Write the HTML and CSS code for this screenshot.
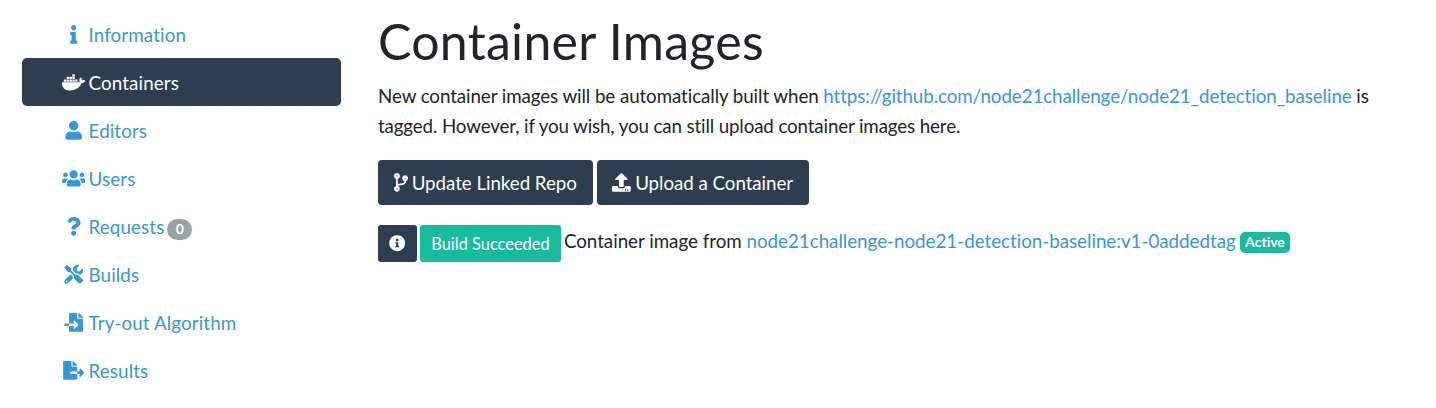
FILE: index.html
```html
<!DOCTYPE html>
<html lang="en">
<head>
<meta charset="utf-8">
<title>Container Images</title>
<link rel="stylesheet" href="styles.css">
</head>
<body>
<div class="layout">
<nav class="sidebar">
<a class="nav-link"><svg class="icon" viewBox="0 0 192 512"><path d="M20 424.229h20V279.771H20c-11.046 0-20-8.954-20-20V212c0-11.046 8.954-20 20-20h112c11.046 0 20 8.954 20 20v212.229h20c11.046 0 20 8.954 20 20V492c0 11.046-8.954 20-20 20H20c-11.046 0-20-8.954-20-20v-47.771c0-11.046 8.954-20 20-20zM96 0C56.235 0 24 32.235 24 72s32.235 72 72 72 72-32.235 72-72S135.764 0 96 0z"/></svg><span>Information</span></a>
<a class="nav-link active"><svg class="icon" viewBox="0 0 640 512"><path d="M349.900 236.300h-66.100v-59.400h66.100v59.400zm0-204.300h-66.100v60.700h66.100V32zm78.200 144.800H362v59.400h66.100v-59.400zm-156.300-72.100h-66.100v60.100h66.100v-60.100zm78.100 0h-66.100v60.100h66.100v-60.100zm276.800 100c-14.400-9.700-47.600-13.200-73.100-8.400-3.300-24-16.700-44.900-41.100-63.700l-14-9.300-9.300 14c-18.400 27.800-23.400 73.600-3.700 103.800-8.700 4.700-25.800 11.100-48.400 10.700H2.400c-8.700 50.800 5.800 116.800 44 162.100 37.100 43.900 92.700 66.200 165.400 66.200 157.400 0 273.900-72.500 328.400-204.200 21.400.4 67.600.1 91.300-45.200 1.500-2.500 6.600-13.200 8.500-17.100l-13.300-8.900zm-511.100-27.900h-66v59.400h66.100v-59.400zm78.100 0h-66.100v59.400h66.100v-59.400zm78.100 0h-66.100v59.400h66.100v-59.400zm-78.100-72.100h-66.100v60.100h66.100v-60.100z"/></svg><span>Containers</span></a>
<a class="nav-link"><svg class="icon" viewBox="0 0 448 512"><path d="M224 256c70.700 0 128-57.300 128-128S294.700 0 224 0 96 57.300 96 128s57.300 128 128 128zm89.600 32h-16.700c-22.200 10.200-46.900 16-72.900 16s-50.600-5.800-72.900-16h-16.700C60.200 288 0 348.200 0 422.400V464c0 26.500 21.500 48 48 48h352c26.500 0 48-21.500 48-48v-41.600c0-74.200-60.200-134.400-134.400-134.400z"/></svg><span>Editors</span></a>
<a class="nav-link"><svg class="icon" viewBox="0 0 640 512"><path d="M96 224c35.300 0 64-28.700 64-64s-28.700-64-64-64-64 28.700-64 64 28.700 64 64 64zm448 0c35.300 0 64-28.700 64-64s-28.700-64-64-64-64 28.700-64 64 28.700 64 64 64zm32 32h-64c-17.600 0-33.500 7.100-45.100 18.600 40.300 22.100 68.900 62 75.100 109.400h66c17.700 0 32-14.300 32-32v-32c0-35.300-28.700-64-64-64zm-256 0c61.900 0 112-50.100 112-112S381.900 32 320 32 208 82.100 208 144s50.100 112 112 112zm76.800 32h-8.300c-20.800 10-43.900 16-68.500 16s-47.600-6-68.500-16h-8.300C179.600 288 128 339.600 128 403.200V432c0 26.500 21.500 48 48 48h288c26.500 0 48-21.500 48-48v-28.800c0-63.600-51.600-115.200-115.200-115.200zm-223.700-13.400C161.500 263.100 145.600 256 128 256H64c-35.300 0-64 28.700-64 64v32c0 17.700 14.300 32 32 32h65.900c6.300-47.400 34.900-87.300 75.200-109.400z"/></svg><span>Users</span></a>
<a class="nav-link"><svg class="icon" viewBox="0 0 384 512"><path d="M202.021 0C122.202 0 70.503 32.703 29.914 91.026c-7.363 10.580-5.093 25.086 5.178 32.874l43.138 32.709c10.373 7.865 25.132 6.026 33.253-4.148 25.049-31.381 43.630-49.449 82.757-49.449 30.764 0 68.816 19.799 68.816 49.631 0 22.552-18.617 34.134-48.993 51.164-35.423 19.860-82.299 44.576-82.299 106.405V320c0 13.255 10.745 24 24 24h72.471c13.255 0 24-10.745 24-24v-5.773c0-42.860 125.268-44.645 125.268-160.627C377.504 66.256 286.902 0 202.021 0zM192 373.459c-38.196 0-69.271 31.075-69.271 69.271 0 38.195 31.075 69.270 69.271 69.270s69.271-31.075 69.271-69.271-31.075-69.270-69.271-69.270z"/></svg><span>Requests <b class="badge pill">0</b></span></a>
<a class="nav-link"><svg class="icon" viewBox="0 0 512 512"><path d="M501.100 395.700L384 278.600c-23.100-23.100-57.600-27.600-85.400-13.900L192 158.100V96L64 0 0 64l96 128h62.100l106.600 106.600c-13.600 27.800-9.200 62.300 13.900 85.400l117.100 117.100c14.600 14.600 38.200 14.600 52.700 0l52.700-52.700c14.500-14.600 14.500-38.200 0-52.700zM331.700 225c28.300 0 54.900 11 74.900 31l19.400 19.400c15.800-6.900 30.800-16.500 43.800-29.500 37.100-37.100 49.700-89.300 37.900-136.700-2.200-9-13.500-12.100-20.100-5.500l-74.400 74.400-67.900-11.300L334 98.900l74.400-74.400c6.600-6.600 3.400-17.900-5.700-20.200-47.400-11.700-99.600.9-136.600 37.900-28.500 28.500-41.900 66.100-41.200 103.600l82.100 82.100c8.100-1.900 16.500-2.900 24.700-2.900zm-103.900 82l-56.700-56.700L18.700 402.800c-25 25-25 65.500 0 90.500s65.500 25 90.500 0l123.600-123.600c-7.600-19.900-9.900-41.600-5-62.700zM64 472c-13.200 0-24-10.800-24-24 0-13.300 10.700-24 24-24s24 10.700 24 24c0 13.200-10.700 24-24 24z"/></svg><span>Builds</span></a>
<a class="nav-link"><svg class="icon" viewBox="0 0 512 512"><path d="M16 288c-8.800 0-16 7.200-16 16v32c0 8.800 7.200 16 16 16h112v-64zm489-183L407.100 7c-4.500-4.500-10.600-7-17-7H384v128h128v-6.100c0-6.300-2.500-12.400-7-16.900zm-153 31V0H152c-13.300 0-24 10.700-24 24v264h128v-65.200c0-14.300 17.300-21.400 27.400-11.300L379 308c6.600 6.700 6.600 17.400 0 24l-95.700 96.400c-10.100 10.100-27.400 3-27.400-11.300V352H128v136c0 13.300 10.700 24 24 24h336c13.300 0 24-10.700 24-24V160H376c-13.200 0-24-10.800-24-24z"/></svg><span>Try-out Algorithm</span></a>
<a class="nav-link"><svg class="icon" viewBox="0 0 576 512"><path d="M384 121.900c0-6.300-2.500-12.400-7-16.900L279.100 7c-4.500-4.500-10.600-7-17-7H256v128h128zM571 308l-95.700-96.400c-10.100-10.100-27.400-3-27.400 11.300V288h-64v64h64v65.200c0 14.300 17.300 21.400 27.400 11.300L571 332c6.600-6.600 6.600-17.400 0-24zm-379 28v-32c0-8.800 7.200-16 16-16h176V160H248c-13.200 0-24-10.800-24-24V0H24C10.700 0 0 10.700 0 24v464c0 13.300 10.700 24 24 24h336c13.300 0 24-10.700 24-24V352H208c-8.800 0-16-7.200-16-16z"/></svg><span>Results</span></a>
</nav>
<main class="content">
<h1>Container Images</h1>
<p>New container images will be automatically built when <a>https://github.com/node21challenge/node21_detection_baseline</a> is <span class="tail">tagged. However, if you wish, you can still upload container images here.</span></p>
<div class="actions">
<a class="btn"><svg class="glyph" viewBox="0 0 384 512"><path d="M384 144c0-44.200-35.800-80-80-80s-80 35.800-80 80c0 36.400 24.300 67.100 57.500 76.800-.6 16.100-4.200 28.500-11 36.900-15.400 19.200-49.300 22.400-85.200 25.700-28.200 2.600-57.400 5.400-81.300 16.900v-144c32.500-10.200 56-40.500 56-76.300 0-44.200-35.800-80-80-80S0 35.800 0 80c0 35.800 23.500 66.100 56 76.300v199.300C23.500 365.900 0 396.200 0 432c0 44.200 35.800 80 80 80s80-35.800 80-80c0-34-21.200-63.100-51.200-74.600 3.100-5.200 7.800-9.800 14.900-13.400 16.200-8.200 40.400-10.400 66.100-12.800 42.200-3.900 90-8.400 118.200-43.400 14-17.400 21.100-39.800 21.600-67.900 31.600-10.800 54.400-40.700 54.400-75.900zM80 64c8.800 0 16 7.200 16 16s-7.200 16-16 16-16-7.200-16-16 7.200-16 16-16zm0 384c-8.800 0-16-7.200-16-16s7.200-16 16-16 16 7.200 16 16-7.200 16-16 16zm224-320c8.800 0 16 7.200 16 16s-7.200 16-16 16-16-7.200-16-16 7.200-16 16-16z"/></svg><span>Update Linked Repo</span></a>
<a class="btn"><svg class="glyph" viewBox="0 0 512 512"><path d="M296 384h-80c-13.300 0-24-10.700-24-24V192h-87.700c-17.800 0-26.700-21.500-14.100-34.100L242.300 5.700c7.500-7.500 19.800-7.500 27.300 0l152.200 152.200c12.600 12.600 3.700 34.100-14.100 34.100H320v168c0 13.300-10.700 24-24 24zm216-8v112c0 13.300-10.700 24-24 24H24c-13.300 0-24-10.700-24-24V376c0-13.300 10.700-24 24-24h136v8c0 30.900 25.100 56 56 56h80c30.900 0 56-25.100 56-56v-8h136c13.300 0 24 10.700 24 24zm-124 88c0-11-9-20-20-20s-20 9-20 20 9 20 20 20 20-9 20-20zm64 0c0-11-9-20-20-20s-20 9-20 20 9 20 20 20 20-9 20-20z"/></svg><span>Upload a Container</span></a>
</div>
<div class="image-row">
<a class="btn-sm"><svg class="glyph" viewBox="0 0 512 512"><path d="M256 8C119 8 8 119.100 8 256c0 137 111 248 248 248s248-111 248-248C504 119.100 393 8 256 8zm0 110c23.200 0 42 18.800 42 42s-18.800 42-42 42-42-18.800-42-42 18.800-42 42-42zm56 254c0 6.600-5.400 12-12 12h-88c-6.600 0-12-5.400-12-12v-24c0-6.600 5.400-12 12-12h12v-64h-12c-6.600 0-12-5.400-12-12v-24c0-6.600 5.400-12 12-12h64c6.600 0 12 5.400 12 12v100h12c6.600 0 12 5.400 12 12z"/></svg></a>
<a class="btn-sm success">Build Succeeded</a>
<span class="desc">Container image from <a>node21challenge-node21-detection-baseline:v1-0addedtag</a> <b class="badge raised">Active</b></span>
</div>
</main>
</div>
</body>
</html>
```
FILE: styles.css
```css
* { box-sizing: border-box; }
body {
  margin: 0;
  background: #fff;
  color: #212529;
  font: 400 18.75px/30px Lato, sans-serif;
  font-variant-ligatures: none;
}
a { color: #3498db; text-decoration: none; }
svg { fill: currentColor; flex: none; }
.layout { display: flex; padding: 10px 22px 0; gap: 37px; }
.sidebar { width: 319px; flex: none; }
.nav-link {
  display: flex;
  align-items: center;
  height: 48px;
  padding-left: 40px;
  gap: 3.2px;
  border-radius: 5px;
  letter-spacing: 0.12px;
}
.nav-link span { padding-top: 2px; }
.nav-link.active { background: #2c3e50; color: #fff; }
.icon { width: 23.4px; height: 18.75px; margin-top: 1px; }
.content { flex: 1; min-width: 0; }
h1 { margin: 1px 0 10px; font-size: 50px; font-weight: 400; line-height: 60px; letter-spacing: 0.3px; }
p { margin: 0 0 19px; letter-spacing: -0.08px; }
.tail { letter-spacing: -0.13px; }
.actions { display: flex; gap: 4px; margin-bottom: 20px; }
.btn {
  display: flex;
  align-items: center;
  height: 45px;
  padding: 0 16px 0 15.6px;
  gap: 4px;
  border-radius: 4px;
  background: #2c3e50;
  color: #fff;
  letter-spacing: -0.05px;
}
.glyph { height: 18.75px; }
.image-row { display: flex; gap: 3px; }
.btn-sm {
  display: flex;
  align-items: center;
  height: 37px;
  padding: 0 11.3px;
  border-radius: 3px;
  background: #2c3e50;
  color: #fff;
  font-size: 16.4px;
}
.btn-sm .glyph { height: 16.4px; }
.success { background: #18bc9c; }
.desc { padding-top: 1px; letter-spacing: -0.01px; }
.badge {
  display: inline-block;
  margin-left: -1px;
  padding: 3.5px 5.6px;
  border-radius: 5px;
  background: #18bc9c;
  color: #fff;
  font-size: 14.06px;
  font-weight: 700;
  line-height: 14px;
  vertical-align: baseline;
}
.raised { vertical-align: 1px; }
.pill { margin-left: -2px; padding: 3.5px 8.4px; border-radius: 20px; background: #95a5a6; }
```
